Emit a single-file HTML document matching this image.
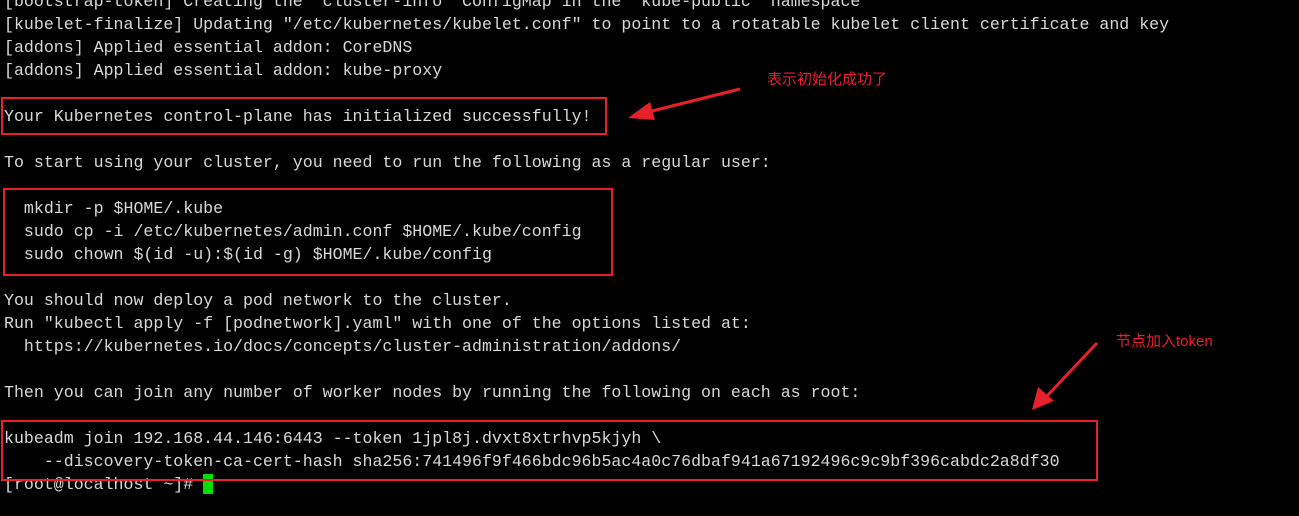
<!DOCTYPE html>
<html><head><meta charset="utf-8"><style>
html,body{margin:0;padding:0;background:#000;width:1299px;height:516px;overflow:hidden;position:relative}
pre{position:absolute;left:4px;top:-10px;margin:0;font-family:"Liberation Mono",monospace;font-size:16.6px;line-height:23px;color:#d8d8d8;white-space:pre}
.box{position:absolute;border:2px solid #e8202a;box-sizing:border-box}
.lbl{position:absolute;color:#e8202a;font-family:"Liberation Sans","Noto Sans CJK SC",sans-serif;font-size:15px}
.cur{position:absolute;left:203px;top:474px;width:10px;height:20px;background:#00e000}
</style></head><body>
<pre>[bootstrap-token] Creating the "cluster-info" ConfigMap in the "kube-public" namespace
[kubelet-finalize] Updating "/etc/kubernetes/kubelet.conf" to point to a rotatable kubelet client certificate and key
[addons] Applied essential addon: CoreDNS
[addons] Applied essential addon: kube-proxy

Your Kubernetes control-plane has initialized successfully!

To start using your cluster, you need to run the following as a regular user:

  mkdir -p $HOME/.kube
  sudo cp -i /etc/kubernetes/admin.conf $HOME/.kube/config
  sudo chown $(id -u):$(id -g) $HOME/.kube/config

You should now deploy a pod network to the cluster.
Run "kubectl apply -f [podnetwork].yaml" with one of the options listed at:
  https://kubernetes.io/docs/concepts/cluster-administration/addons/

Then you can join any number of worker nodes by running the following on each as root:

kubeadm join 192.168.44.146:6443 --token 1jpl8j.dvxt8xtrhvp5kjyh \
    --discovery-token-ca-cert-hash sha256:741496f9f466bdc96b5ac4a0c76dbaf941a67192496c9c9bf396cabdc2a8df30
[root@localhost ~]# </pre>
<div class="cur"></div>
<div class="box" style="left:1px;top:97px;width:606px;height:38px"></div>
<div class="box" style="left:3px;top:188px;width:610px;height:88px"></div>
<div class="box" style="left:1px;top:420px;width:1097px;height:61px"></div>
<div class="lbl" style="left:767px;top:68px">表示初始化成功了</div>
<div class="lbl" style="left:1116px;top:330px">节点加入token</div>
<svg style="position:absolute;left:0;top:0" width="1299" height="516">
<line x1="740" y1="89" x2="648" y2="112" stroke="#e8202a" stroke-width="3"/>
<polygon points="628,118 650,102 655,120" fill="#e8202a"/>
<line x1="1097" y1="343" x2="1047" y2="396" stroke="#e8202a" stroke-width="3"/>
<polygon points="1032,410 1038,387 1054,401" fill="#e8202a"/>
</svg>
</body></html>
